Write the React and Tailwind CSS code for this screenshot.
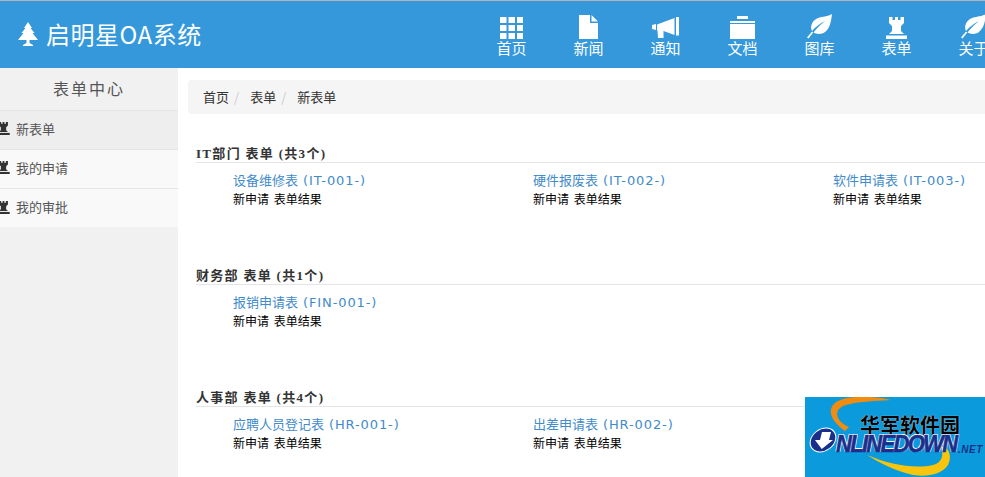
import React from 'react';

const cjk = '"Noto Sans CJK SC", sans-serif';

function Tree({ className }) {
  return (
    <svg viewBox="0 0 20 24" className={className} fill="currentColor">
      <path d="M10 0 L14 6 L12.5 6 L16.5 11 L14.5 11 L20 18 L11.5 18 L11.5 21 L15 23 L15 24 L5 24 L5 23 L8.5 21 L8.5 18 L0 18 L5.5 11 L3.5 11 L7.5 6 L6 6 Z" />
    </svg>
  );
}

function GridIcon() {
  return (
    <svg viewBox="0 0 23 22" className="w-[23px] h-[22px]" fill="currentColor">
      {[0, 8, 16].map((y) =>
        [0, 8.5, 17].map((x) => <rect key={`${x}-${y}`} x={x} y={y} width="6.5" height="6" />)
      )}
    </svg>
  );
}

function FileIcon() {
  return (
    <svg viewBox="0 0 19 24" className="w-[19px] h-[24px]" fill="currentColor">
      <path d="M0 0 H11 V8 H19 V24 H0 Z M12.5 0 L19 6.5 H12.5 Z" />
    </svg>
  );
}

function HornIcon() {
  return (
    <svg viewBox="0 0 27 22" className="w-[27px] h-[22px]" fill="currentColor">
      <path d="M0 8 L4 7 V13 L0 12 Z" />
      <path d="M5 7.500 L22.500 1 V18 L11.500 14 L11.500 21 L6 21 L5.500 13.500 L5 13.500 Z" />
      <rect x="24" y="0" width="3" height="18.500" />
    </svg>
  );
}

function FolderIcon() {
  return (
    <svg viewBox="0 0 25 23" className="w-[25px] h-[23px]" fill="currentColor">
      <path d="M7 0 H18 V3 H7 Z M0 5 H25 V7 H0 Z M0 8 H25 V23 H0 Z" />
    </svg>
  );
}

function LeafIcon() {
  return (
    <svg viewBox="0 0 25 25" className="w-[25px] h-[25px]" fill="currentColor">
      <path d="M25 0 C24 8 23 14 18 18 C14 21 9 20 6.5 18.5 C10 14 14 10 18 7 C13 9.5 8.5 13 5 17 C3 13 4.500 8 9 5 C13 2.500 20 3 25 0 Z" />
      <path d="M5 17.500 L6.200 18.500 L1.500 24.500 L0 23.500 Z" />
    </svg>
  );
}

function RookIcon({ className }) {
  return (
    <svg viewBox="0 0 21 22" className={className} fill="currentColor">
      <path d="M3 0 H6.500 V3 H9 V0 H12 V3 H14.500 V0 H18 V6 L15 9 V14 L18 17 H3 L6 14 V9 L3 6 Z" />
      <rect x="0" y="18.500" width="21" height="3.500" />
    </svg>
  );
}

const navItems = [
  { label: '首页', icon: <GridIcon /> },
  { label: '新闻', icon: <FileIcon /> },
  { label: '通知', icon: <HornIcon /> },
  { label: '文档', icon: <FolderIcon /> },
  { label: '图库', icon: <LeafIcon /> },
  { label: '表单', icon: <RookIcon className="w-[21px] h-[22px]" /> },
  { label: '关于', icon: <LeafIcon /> },
];

const sideItems = [
  { label: '新表单', active: true },
  { label: '我的申请' },
  { label: '我的审批', last: true },
];

const groups = [
  {
    title: 'IT部门',
    count: 3,
    forms: [
      { name: '设备维修表', code: 'IT-001-' },
      { name: '硬件报废表', code: 'IT-002-' },
      { name: '软件申请表', code: 'IT-003-' },
    ],
  },
  {
    title: '财务部',
    count: 1,
    forms: [{ name: '报销申请表', code: 'FIN-001-' }],
  },
  {
    title: '人事部',
    count: 4,
    forms: [
      { name: '应聘人员登记表', code: 'HR-001-' },
      { name: '出差申请表', code: 'HR-002-' },
    ],
  },
];

function FormCell({ name, code }) {
  return (
    <div className="w-[300px] shrink-0 pl-[37px]">
      <div className="h-[19px] text-[13px] leading-[19px] text-[#428bca] whitespace-nowrap">
        {name} <span className="ml-[2px] [font-family:'DejaVu_Sans',sans-serif] tracking-[0.9px]">({code})</span>
      </div>
      <div className="h-[19px] text-[12px] leading-[19px] [word-spacing:2px] text-black whitespace-nowrap">新申请 表单结果</div>
    </div>
  );
}

function FormGroup({ title, count, forms }) {
  return (
    <section className="h-[122px]">
      <h4 className="h-[18px] border-b border-[#e5e5e5] text-[13px] leading-[17px] font-bold tracking-[1.3px] text-[#333] whitespace-nowrap [font-family:'Liberation_Serif','Noto_Sans_CJK_SC',serif]">
        {title} 表单 (共{count}个)
      </h4>
      <div className="flex pt-[7px]">
        {forms.map((f) => <FormCell key={f.code} {...f} />)}
      </div>
    </section>
  );
}

function Watermark() {
  return (
    <div className="absolute left-[805px] top-[397px] w-[180px] h-[80px] overflow-hidden bg-[#0b9bdc]">
      <svg viewBox="0 0 180 80" className="absolute inset-0 w-full h-full">
        <path d="M86 3 C70 -1 45 -2 33 4 C22 10 23 22 40 34 L44 30 C31 24 28 14 38 9 C48 5 68 4 86 3 Z" fill="#f08c10" />
        <path d="M62 58 C75 66 90 74 108 78 C122 80 136 78 143 68 C147 60 144 54 141 50 L136 50 C139 58 137 66 128 68 C110 72 85 68 62 58 Z" fill="#f8c40c" />
        <g transform="translate(18 43) skewX(-14)">
          <ellipse cx="0" cy="0" rx="12.500" ry="12" fill="#1a2f8c" stroke="#fff" strokeWidth="1" />
          <path d="M-3 -8 H6 V0 H10 L1 9 L-8 0 H-3 Z" fill="#fff" />
        </g>
      </svg>
      <div className="absolute left-[55px] top-[19px] text-[20px] leading-[18px] font-bold text-black whitespace-nowrap [text-shadow:0_0_1px_#fff]">华军软件园</div>
      <div className="absolute left-[31px] top-[37px] text-[22px] leading-[20px] font-bold italic text-[#1a2f8c] tracking-[-1.700px] scale-y-110 whitespace-nowrap [font-family:'Liberation_Sans',sans-serif] [-webkit-text-stroke:0.600px_#1a2f8c] [text-shadow:0.700px_0.700px_0_#fff,-0.700px_-0.700px_0_#fff,0.700px_-0.700px_0_#fff,-0.700px_0.700px_0_#fff]">NLINEDOWN</div>
      <div className="absolute left-[153px] top-[47px] text-[10px] leading-[12px] font-bold italic tracking-[0.500px] text-[#16308a] [font-family:'Liberation_Sans',sans-serif]">.NET</div>
    </div>
  );
}

export default function App() {
  return (
    <div className="relative w-[985px] h-[477px] overflow-hidden bg-white flex flex-col" style={{ fontFamily: cjk }}>
      <header className="shrink-0 h-[68px] border-t border-[#b0b4b8] bg-[#3498db] text-white flex">
        <div className="w-[473px] shrink-0 flex items-center pl-[18px] pb-[1px]">
          <Tree className="w-[20px] h-[24px] mr-[8px]" />
          <span className="text-[24px] leading-[30px] tracking-[0.5px] whitespace-nowrap">启明星OA系统</span>
        </div>
        <nav className="flex">
          {navItems.map((item) => (
            <a key={item.label} className="w-[77px] shrink-0 flex flex-col items-center">
              <div className="h-[25px] mt-[13px] flex items-end justify-center">{item.icon}</div>
              <span className="text-[15px] leading-[16px] mt-[1px] whitespace-nowrap">{item.label}</span>
            </a>
          ))}
        </nav>
      </header>
      <div className="flex flex-1 min-h-0">
        <aside className="w-[178px] shrink-0 bg-[#f1f1f1]">
          <div className="h-[43px] border-b border-[#e5e5e5] text-center text-[16px] leading-[40px] tracking-[2px] text-[#555]">表单中心</div>
          {sideItems.map((item) => (
            <div
              key={item.label}
              className={`flex items-center text-[13px] text-[#555] ${item.last ? 'h-[38px] pb-[2px]' : 'h-[39px] pb-[3px] border-b border-[#e5e5e5]'} ${item.active ? 'bg-[#eeeeee]' : 'bg-[#f9f9f9]'}`}
            >
              <RookIcon className="w-[13px] h-[13px] -ml-[3px] mr-[6px] text-[#333]" />
              <span>{item.label}</span>
            </div>
          ))}
        </aside>
        <main className="flex-1 min-w-0 pt-[12px] pl-[10px]">
          <div className="h-[34px] rounded-l-[4px] bg-[#f5f5f5] flex items-center pl-[15px] text-[13px] text-[#333]">
            <span>首页</span>
            <span className="text-[#ccc] ml-[5px] mr-[11px]">/</span>
            <span>表单</span>
            <span className="text-[#ccc] ml-[5px] mr-[11px]">/</span>
            <span>新表单</span>
          </div>
          <div className="pl-[8px] pt-[31px]">
            {groups.map((g) => <FormGroup key={g.title} {...g} />)}
          </div>
        </main>
      </div>
      <Watermark />
    </div>
  );
}
